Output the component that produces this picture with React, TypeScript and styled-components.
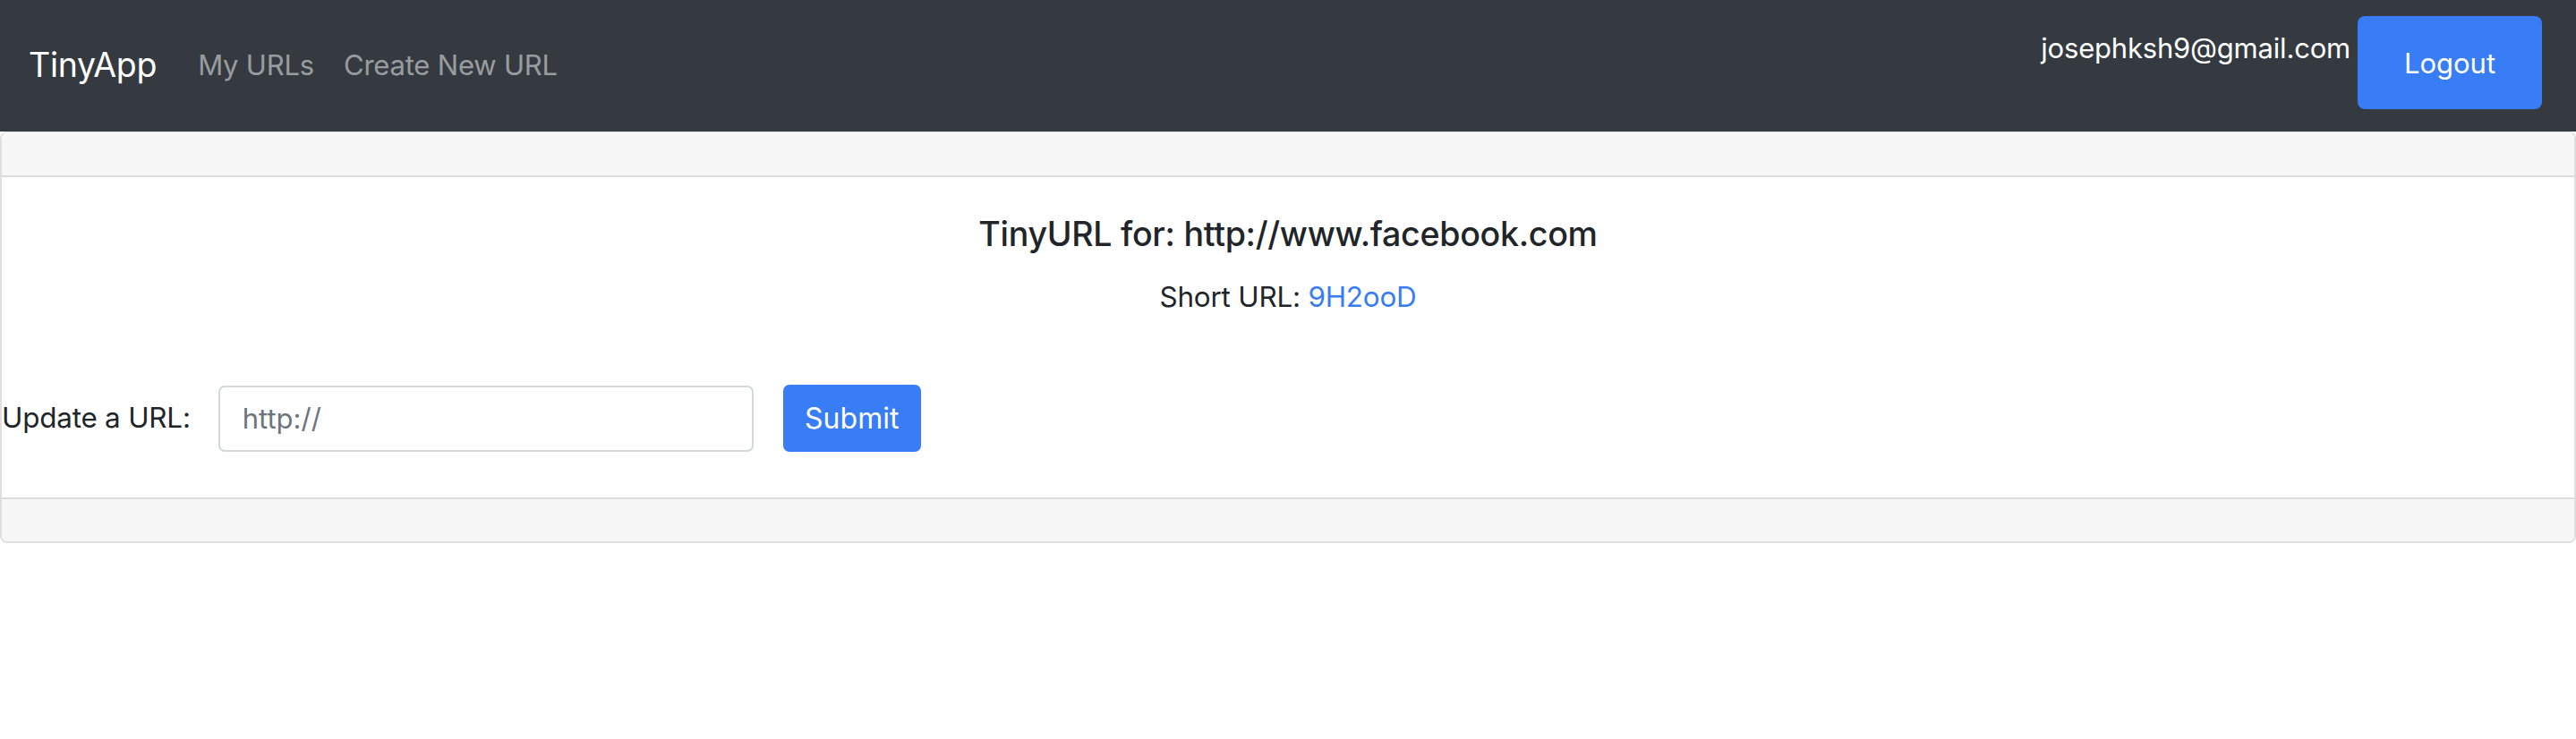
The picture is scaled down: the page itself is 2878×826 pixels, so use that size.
import styled, { createGlobalStyle } from 'styled-components'

const GlobalStyle = createGlobalStyle`
  html, body {
    margin: 0;
    padding: 0;
    background: #fff;
  }
  body {
    font-family: Inter, "Liberation Sans", Arial, sans-serif;
    color: #212529;
  }
  * {
    box-sizing: border-box;
  }
`

const App = () => {
  return (
    <>
      <GlobalStyle />
      <Navbar>
        <NavLeft>
          <Brand href="#">TinyApp</Brand>
          <NavLink href="#">My URLs</NavLink>
          <NavLink href="#">Create New URL</NavLink>
        </NavLeft>
        <NavRight>
          <UserEmail>josephksh9@gmail.com</UserEmail>
          <LogoutButton type="button">Logout</LogoutButton>
        </NavRight>
      </Navbar>

      <Card>
        <CardHeader />
        <CardBody>
          <Title>TinyURL for: http://www.facebook.com</Title>
          <ShortUrl>
            Short URL: <ShortLink href="#">9H2ooD</ShortLink>
          </ShortUrl>
          <UpdateForm onSubmit={(e) => e.preventDefault()}>
            <FormLabel htmlFor="longURL">Update a URL:</FormLabel>
            <UrlInput id="longURL" type="text" placeholder="http://" />
            <SubmitButton type="submit">Submit</SubmitButton>
          </UpdateForm>
        </CardBody>
        <CardFooter />
      </Card>
    </>
  )
}

export default App

const Navbar = styled.nav`
  height: 147px;
  background: #343a40;
  display: flex;
  justify-content: space-between;
  align-items: stretch;
  padding: 0 38px 0 32px;
`

const NavLeft = styled.div`
  display: flex;
  align-items: center;
`

const Brand = styled.a`
  color: #fff;
  font-size: 37.5px;
  line-height: 1.5;
  text-decoration: none;
  margin-right: 46px;
  letter-spacing: -0.3px;
`

const NavLink = styled.a`
  color: rgba(255, 255, 255, 0.5);
  font-size: 31px;
  line-height: 1.5;
  text-decoration: none;
  margin-right: 33px;
  letter-spacing: -0.2px;
`

const NavRight = styled.div`
  display: flex;
  align-items: flex-start;
  padding-top: 18px;
  gap: 8px;
`

const UserEmail = styled.span`
  color: #fff;
  font-size: 31px;
  line-height: 1.5;
  margin-top: 13px;
  letter-spacing: -0.2px;
`

const LogoutButton = styled.button`
  width: 206px;
  height: 104px;
  border: none;
  border-radius: 8px;
  background: #387cf6;
  color: #fff;
  font-family: inherit;
  font-size: 31px;
  padding: 0;
  cursor: pointer;
`

const Card = styled.div`
  border: 2px solid #dfdfdf;
  border-top-width: 1px;
  border-radius: 8px;
  overflow: hidden;
  display: flex;
  flex-direction: column;
`

const CardHeader = styled.div`
  height: 50px;
  background: #f7f7f7;
  border-bottom: 2px solid #dcdcdc;
`

const CardFooter = styled.div`
  height: 49px;
  background: #f7f7f7;
  border-top: 2px solid #dcdcdc;
`

const CardBody = styled.div`
  display: flex;
  flex-direction: column;
  align-items: center;
  padding: 40px 0 51px;
`

const Title = styled.h4`
  margin: 0;
  font-size: 37.6px;
  font-weight: 500;
  line-height: 1.28;
  letter-spacing: -0.3px;
  color: #212529;
`

const ShortUrl = styled.p`
  margin: 23px 0 0;
  font-size: 31.4px;
  line-height: 1.5;
  letter-spacing: -0.2px;
  color: #212529;
`

const ShortLink = styled.a`
  color: #387cf6;
  text-decoration: none;
`

const UpdateForm = styled.form`
  align-self: stretch;
  display: flex;
  align-items: center;
  margin-top: 74px;
  padding-left: 0;
`

const FormLabel = styled.label`
  font-size: 31.4px;
  line-height: 1.5;
  letter-spacing: -0.2px;
  color: #212529;
  margin-right: 31px;
`

const UrlInput = styled.input`
  width: 598px;
  height: 74px;
  border: 2px solid #d3d6da;
  border-radius: 7px;
  padding: 0 25px;
  font-family: inherit;
  font-size: 31px;
  color: #495057;
  outline: none;

  &::placeholder {
    color: #6c757d;
  }
`

const SubmitButton = styled.button`
  margin-left: 33px;
  width: 154px;
  height: 75px;
  border: none;
  border-radius: 7px;
  background: #387cf6;
  color: #fff;
  font-family: inherit;
  font-size: 32px;
  padding: 0;
  cursor: pointer;
`
